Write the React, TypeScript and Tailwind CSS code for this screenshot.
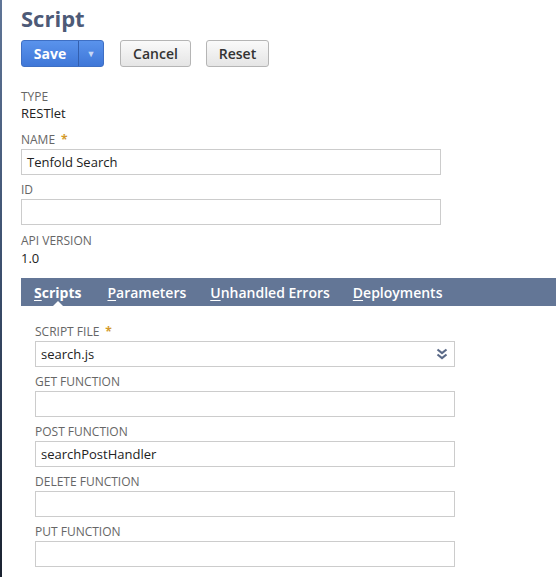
import React from 'react';

const font = { fontFamily: '"Open Sans", "Liberation Sans", sans-serif' };

function Label({ text, required }: { text: string; required?: boolean }) {
  return (
    <div className="h-[23px] pt-[6px] text-[12px] leading-[16px] text-[#666] uppercase">
      {text}
      {required && <span className="ml-[6px] text-[#d49a2c] font-bold">*</span>}
    </div>
  );
}

function TextField({ label, value, required }: { label: string; value?: string; required?: boolean }) {
  return (
    <div className="h-[50px]">
      <Label text={label} required={required} />
      <div className="w-[420px] h-[26px] border border-[#cccccc] bg-white px-[5px] text-[13px] leading-[24px] text-[#222]">
        {value}
      </div>
    </div>
  );
}

function Tab({ first, rest, active, x }: { first: string; rest: string; active?: boolean; x: string }) {
  return (
    <span className={`text-white text-[14px] ${active ? 'font-bold' : 'font-semibold'} ${x}`}>
      <span className="underline underline-offset-2">{first}</span>
      {rest}
    </span>
  );
}

export default function App() {
  return (
    <div className="flex w-[556px] h-[577px] bg-white overflow-hidden" style={font}>
      <div className="w-[2px] h-full bg-gradient-to-b from-[#5f7597] via-[#3a4d6b] to-[#1a2230]" />
      <div className="flex-1 pl-[19px]">
        <h1 className="mt-[3px] text-[22px] leading-[30px] font-bold text-[#4d5a77]">Script</h1>

        <div className="mt-[7px] flex items-center h-[27px]">
          <div className="flex h-[27px] w-[83px] rounded-[3px] border border-[#3e6fc4] bg-gradient-to-b from-[#5a93ec] to-[#3f77d8] text-white">
            <span className="w-[56px] text-center text-[14px] leading-[25px] font-bold">Save</span>
            <span className="w-px bg-[#335fae]" />
            <span className="flex-1 flex items-center justify-center text-[9px] text-[#c7d8f5]">▼</span>
          </div>
          <button className="ml-[16px] h-[27px] w-[71px] rounded-[3px] border border-[#b5b5b5] bg-gradient-to-b from-[#fafafa] to-[#e5e5e5] text-[14px] font-semibold text-[#333]">
            Cancel
          </button>
          <button className="ml-[15px] h-[27px] w-[63px] rounded-[3px] border border-[#b5b5b5] bg-gradient-to-b from-[#fafafa] to-[#e5e5e5] text-[14px] font-semibold text-[#333]">
            Reset
          </button>
        </div>

        <div className="mt-[23px] text-[12px] leading-[14px] text-[#666]">TYPE</div>
        <div className="text-[13px] leading-[18px] text-[#222]">RESTlet</div>

        <div className="mt-[4px]">
          <TextField label="Name" value="Tenfold Search" required />
          <TextField label="ID" />
        </div>

        <div className="mt-[7px] text-[12px] leading-[16px] text-[#666]">API VERSION</div>
        <div className="text-[13px] leading-[18px] text-[#222]">1.0</div>

        <div className="relative mt-[11px] h-[28px] bg-[#637696] flex items-center">
          <Tab first="S" rest="cripts" active x="ml-[13px]" />
          <Tab first="P" rest="arameters" x="ml-[26px]" />
          <Tab first="U" rest="nhandled Errors" x="ml-[24px]" />
          <Tab first="D" rest="eployments" x="ml-[23px]" />
          <span className="absolute left-[32px] bottom-0 w-0 h-0 border-l-[5px] border-r-[5px] border-b-[5px] border-l-transparent border-r-transparent border-b-white" />
        </div>

        <div className="pl-[14px] pt-[12px]">
          <div className="h-[50px]">
            <Label text="Script file" required />
            <div className="w-[420px] h-[26px] border border-[#cccccc] bg-white px-[5px] text-[13px] leading-[24px] text-[#222] flex items-center justify-between">
              <span>search.js</span>
              <svg width="12" height="12" viewBox="0 0 12 12" className="mr-[1px]">
                <path d="M1.5 1.5 L6 5 L10.5 1.5" stroke="#5b6a88" strokeWidth="2.2" fill="none" />
                <path d="M1.5 6.5 L6 10 L10.5 6.5" stroke="#5b6a88" strokeWidth="2.2" fill="none" />
              </svg>
            </div>
          </div>
          <TextField label="Get function" />
          <TextField label="Post function" value="searchPostHandler" />
          <TextField label="Delete function" />
          <TextField label="Put function" />
        </div>
      </div>
    </div>
  );
}
